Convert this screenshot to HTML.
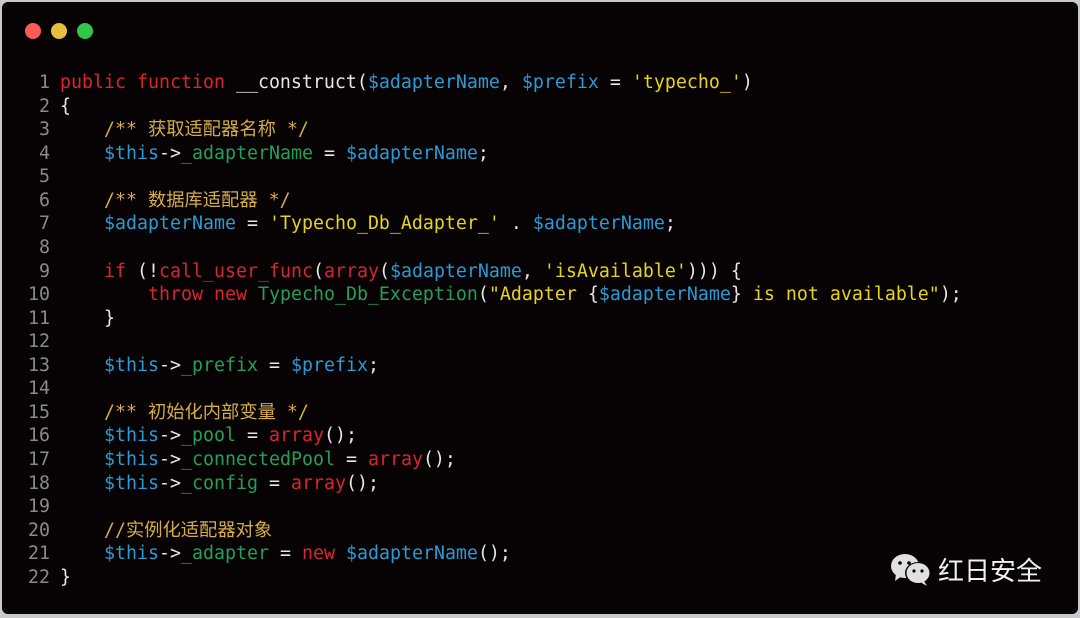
<!DOCTYPE html>
<html><head><meta charset="utf-8"><style>
html,body{margin:0;padding:0;background:#c9c9cb;width:1080px;height:618px;overflow:hidden}
.win{position:absolute;left:2px;top:2px;width:1076px;height:612px;background:#070304;border-radius:6px}
.dot{position:absolute;top:21px;width:16px;height:16px;border-radius:50%}
pre{position:absolute;left:0;top:69px;margin:0;font-family:"DejaVu Sans Mono","Noto Sans CJK SC",monospace;font-size:18.27px;line-height:23.57px;color:#e6e6e6}
.n{color:#8a8a8a;display:inline-block;width:48px;text-align:right;margin-right:10px}
.k{color:#d7262e}.v{color:#2a9bd4}.g{color:#22a05a}.c{color:#d4ad48}.s{color:#e8d418}
.wm{position:absolute;left:890px;top:550px;color:#f2f2f2;font-family:"Noto Sans CJK SC",sans-serif;font-size:26px;line-height:40px}
</style></head><body>
<div class="win">
<div class="dot" style="left:23px;background:#fc5b57"></div>
<div class="dot" style="left:49px;background:#e5bf3c"></div>
<div class="dot" style="left:75px;background:#2fc84a"></div>
<pre><span class="n">1</span><span class="k">public function</span> __construct(<span class="v">$adapterName</span>, <span class="v">$prefix</span> = <span class="s">'typecho_'</span>)
<span class="n">2</span>{
<span class="n">3</span>    <span class="c">/** 获取适配器名称 */</span>
<span class="n">4</span>    <span class="v">$this</span>-&gt;<span class="g">_adapterName</span> = <span class="v">$adapterName</span>;
<span class="n">5</span>
<span class="n">6</span>    <span class="c">/** 数据库适配器 */</span>
<span class="n">7</span>    <span class="v">$adapterName</span> = <span class="s">'Typecho_Db_Adapter_'</span> . <span class="v">$adapterName</span>;
<span class="n">8</span>
<span class="n">9</span>    <span class="k">if</span> (!<span class="k">call_user_func</span>(<span class="k">array</span>(<span class="v">$adapterName</span>, <span class="s">'isAvailable'</span>))) {
<span class="n">10</span>        <span class="k">throw new</span> <span class="g">Typecho_Db_Exception</span>(<span class="s">"Adapter </span>{<span class="v">$adapterName</span>}<span class="s"> is not available"</span>);
<span class="n">11</span>    }
<span class="n">12</span>
<span class="n">13</span>    <span class="v">$this</span>-&gt;<span class="g">_prefix</span> = <span class="v">$prefix</span>;
<span class="n">14</span>
<span class="n">15</span>    <span class="c">/** 初始化内部变量 */</span>
<span class="n">16</span>    <span class="v">$this</span>-&gt;<span class="g">_pool</span> = <span class="k">array</span>();
<span class="n">17</span>    <span class="v">$this</span>-&gt;<span class="g">_connectedPool</span> = <span class="k">array</span>();
<span class="n">18</span>    <span class="v">$this</span>-&gt;<span class="g">_config</span> = <span class="k">array</span>();
<span class="n">19</span>
<span class="n">20</span>    <span class="c">//实例化适配器对象</span>
<span class="n">21</span>    <span class="v">$this</span>-&gt;<span class="g">_adapter</span> = <span class="k">new</span> <span class="v">$adapterName</span>();
<span class="n">22</span>}</pre>
</div>
<svg style="position:absolute;left:890px;top:553px" width="44" height="34" viewBox="0 0 44 34">
<ellipse cx="15" cy="13" rx="14" ry="12" fill="#e0e0e0"/>
<path d="M6 21 L5 28 L12 23Z" fill="#e0e0e0"/>
<ellipse cx="28" cy="20" rx="13" ry="11" fill="#070304"/>
<ellipse cx="28" cy="20" rx="11.5" ry="10" fill="#e0e0e0"/>
<path d="M34 28 L37 33 L30 29Z" fill="#e0e0e0"/>
<circle cx="10" cy="10" r="1.8" fill="#070304"/><circle cx="19" cy="10" r="1.8" fill="#070304"/>
<circle cx="24" cy="18" r="1.6" fill="#070304"/><circle cx="32" cy="18" r="1.6" fill="#070304"/>
</svg>
<div class="wm" style="left:938px">红日安全</div>
</body></html>
